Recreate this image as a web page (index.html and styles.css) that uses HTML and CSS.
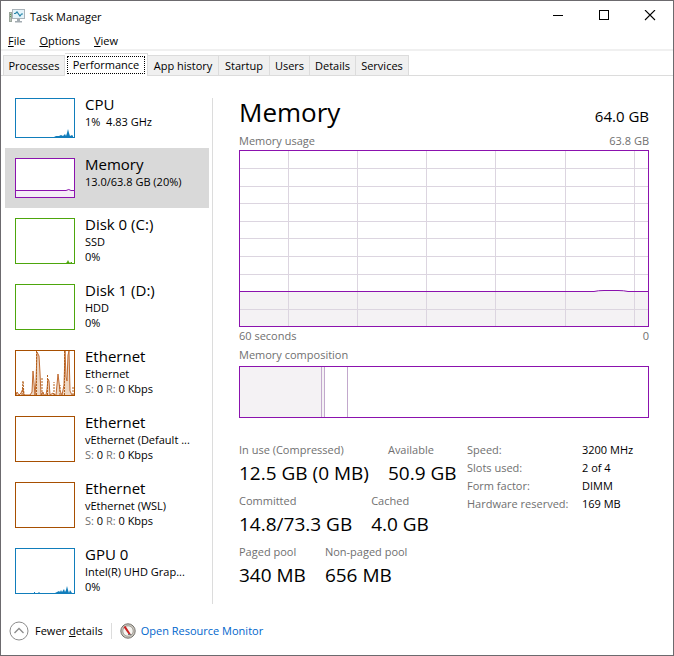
FILE: index.html
```html
<!DOCTYPE html>
<html lang="en">
<head>
<meta charset="utf-8">
<title>Task Manager</title>
<link rel="stylesheet" href="styles.css">
</head>
<body>
<div class="window">
  <header class="titlebar">
    <svg class="app-icon" width="16" height="16" viewBox="0 0 16 16" aria-hidden="true">
      <rect x="0.5" y="4.5" width="2" height="9" fill="#b9c2b9" stroke="#9aa59b"/>
      <path d="M1 6.500h1M1 8.500h1" stroke="#4f9a5a"/>
      <rect x="3.500" y="1.500" width="12" height="9" fill="#e4f3fa" stroke="#a9b3ba"/>
      <path d="M5 5.500h1.500l1.500-1.500 3 4 1.500-2h1.500" fill="none" stroke="#2785a8" stroke-width="1.200"/>
      <path d="M8 11h3v2h2v1.500H6V13h2z" fill="#a3acb2"/>
    </svg>
    <h1 class="app-title">Task Manager</h1>
    <div class="window-buttons">
      <button type="button" aria-label="Minimize"><svg width="12" height="12" viewBox="0 0 12 12"><path d="M1 5.500h10" stroke="#000"/></svg></button>
      <button type="button" aria-label="Maximize"><svg width="12" height="12" viewBox="0 0 12 12"><rect x="1.500" y="0.500" width="9" height="9" fill="none" stroke="#000"/></svg></button>
      <button type="button" aria-label="Close"><svg width="12" height="12" viewBox="0 0 12 12"><path d="M1 0l10 10M11 0L1 10" stroke="#000" stroke-width="1.100"/></svg></button>
    </div>
  </header>

  <nav class="menubar">
    <button type="button"><u>F</u>ile</button>
    <button type="button"><u>O</u>ptions</button>
    <button type="button"><u>V</u>iew</button>
  </nav>

  <div class="tabs" role="tablist">
    <button type="button" role="tab">Processes</button>
    <button type="button" role="tab" class="active" aria-selected="true"><span>Performance</span></button>
    <button type="button" role="tab">App history</button>
    <button type="button" role="tab">Startup</button>
    <button type="button" role="tab">Users</button>
    <button type="button" role="tab">Details</button>
    <button type="button" role="tab">Services</button>
  </div>

  <div class="content">
    <ul class="devices">
      <li><button type="button" class="device">
        <svg class="thumb blue short" viewBox="0 0 58 38"><path d="M38 38l2-1h3l2-1 2 1 2-2 1 2 1-3 1-4 1 4 1 3 2-1 1 1v1z" class="solid"/></svg>
        <span class="info"><span class="name">CPU</span><span>1%&nbsp; 4.83 GHz</span></span>
      </button></li>
      <li><button type="button" class="device selected">
        <svg class="thumb purple short" viewBox="0 0 58 38"><path d="M-1 31.500H50q3-2 5 0h4v8H-1z" class="area"/></svg>
        <span class="info"><span class="name">Memory</span><span>13.0/63.8 GB (20%)</span></span>
      </button></li>
      <li><button type="button" class="device">
        <svg class="thumb green" viewBox="0 0 58 44"><path d="M50 44l1-1 1-2 1 2 1 1 1-1h1v1z" class="solid"/></svg>
        <span class="info"><span class="name">Disk 0 (C:)</span><span>SSD</span><span>0%</span></span>
      </button></li>
      <li><button type="button" class="device">
        <svg class="thumb green" viewBox="0 0 58 44"></svg>
        <span class="info"><span class="name">Disk 1 (D:)</span><span>HDD</span><span>0%</span></span>
      </button></li>
      <li><button type="button" class="device">
        <svg class="thumb orange" viewBox="0 0 58 44">
          <path d="M0 44L1 41 3 44 5 42 7 38 8 44H14L16 41 17 20 19 44 20 30 21 1 23 5 24 22 25 44 27 41 28 44H30L31 38 32 28 33 30 34 44 37 42 39 44H40L42 23 44 40 46 44 48 34 49 0 50 26 51 30 52 4 53 0 54 40 56 44H58" class="pale"/>
          <path d="M6 44L7 30 8 44M20.500 44V0M26 44V26M31.500 44V24M38 44V31M44 44V34M48.500 44V0M57 44V35" class="dots"/>
        </svg>
        <span class="info"><span class="name">Ethernet</span><span>Ethernet</span><span><i>S:</i> 0 <i>R:</i> 0 Kbps</span></span>
      </button></li>
      <li><button type="button" class="device">
        <svg class="thumb orange" viewBox="0 0 58 44"></svg>
        <span class="info"><span class="name">Ethernet</span><span>vEthernet (Default ...</span><span><i>S:</i> 0 <i>R:</i> 0 Kbps</span></span>
      </button></li>
      <li><button type="button" class="device">
        <svg class="thumb orange" viewBox="0 0 58 44"></svg>
        <span class="info"><span class="name">Ethernet</span><span>vEthernet (WSL)</span><span><i>S:</i> 0 <i>R:</i> 0 Kbps</span></span>
      </button></li>
      <li><button type="button" class="device">
        <svg class="thumb blue" viewBox="0 0 58 44"><path d="M18 44v-1h1v1h3l1-1 1 1h15l2-1 2-1 1 1 1-2 1 2 2-3 1 3 1-2 1-4 1 4 1 3 1-3 2 3v1z" class="solid"/></svg>
        <span class="info"><span class="name">GPU 0</span><span>Intel(R) UHD Grap...</span><span>0%</span></span>
      </button></li>
    </ul>

    <main class="detail">
      <div class="heading">
        <h2>Memory</h2>
        <span class="capacity">64.0 GB</span>
      </div>
      <div class="caption top"><span>Memory usage</span><span>63.8 GB</span></div>
      <svg class="usage" viewBox="0 0 408 175" preserveAspectRatio="none" role="img" aria-label="Memory usage">
        <path d="M0 140.500H354Q358 139.500 364 139.500H378Q384 139.500 388 140.500H408V175H0z" class="fill"/>
        <path d="M48.500 0V175M117.500 0V175M186.500 0V175M255.500 0V175M325.500 0V175M394.500 0V175M0 17.500H408M0 35.500H408M0 52.500H408M0 70.500H408M0 87.500H408M0 105.500H408M0 123.500H408M0 158.500H408" class="grid"/>
        <path d="M0 140.500H354Q358 139.500 364 139.500H378Q384 139.500 388 140.500H408" class="line"/>
      </svg>
      <div class="caption"><span>60 seconds</span><span>0</span></div>
      <div class="caption">Memory composition</div>
      <div class="composition" role="img" aria-label="Memory composition">
        <span class="in-use"></span><span class="modified"></span><span class="standby"></span>
      </div>

      <div class="figures">
        <div class="stats">
          <dl>
            <div><dt>In use (Compressed)</dt><dd>12.5 GB (0 MB)</dd></div>
            <div><dt>Available</dt><dd>50.9 GB</dd></div>
          </dl>
          <dl>
            <div><dt>Committed</dt><dd>14.8/73.3 GB</dd></div>
            <div><dt>Cached</dt><dd>4.0 GB</dd></div>
          </dl>
          <dl>
            <div><dt>Paged pool</dt><dd>340 MB</dd></div>
            <div><dt>Non-paged pool</dt><dd>656 MB</dd></div>
          </dl>
        </div>
        <table class="hardware">
          <tr><th scope="row">Speed:</th><td>3200 MHz</td></tr>
          <tr><th scope="row">Slots used:</th><td>2 of 4</td></tr>
          <tr><th scope="row">Form factor:</th><td>DIMM</td></tr>
          <tr><th scope="row">Hardware reserved:</th><td>169 MB</td></tr>
        </table>
      </div>
    </main>
  </div>

  <footer class="footer">
    <button type="button" class="fewer">
      <svg width="20" height="20" viewBox="0 0 20 20" aria-hidden="true"><circle cx="10" cy="10" r="9" fill="#fff" stroke="#8c8c8c"/><path d="M5.500 12L10 7.500 14.500 12" fill="none" stroke="#8c8c8c" stroke-width="1.300"/></svg>
      <span>Fewer <u>d</u>etails</span>
    </button>
    <a class="monitor" href="#resource-monitor">
      <svg width="16" height="16" viewBox="0 0 16 16" aria-hidden="true"><circle cx="8" cy="8" r="7.200" fill="#c9c5bd" stroke="#76736d"/><circle cx="8" cy="8" r="5.200" fill="#f6f5f1" stroke="#96928a" stroke-width=".8"/><path d="M3.500 4l2-1 5 7.800-1.500 1z" fill="#cb2020"/><path d="M8 11.500h3.500" stroke="#777"/></svg>
      <span>Open Resource Monitor</span>
    </a>
  </footer>
</div>
</body>
</html>
```
FILE: styles.css
```css
* {
  box-sizing: border-box;
}

body {
  margin: 0;
  background: #fff;
  color: #000;
  font: 11px/15px "Open Sans", "Noto Sans", sans-serif;
}

button {
  margin: 0;
  padding: 0;
  border: 0;
  background: none;
  color: inherit;
  font: inherit;
}

h1, h2, ul, dl, dd {
  margin: 0;
  padding: 0;
  font-weight: 400;
}

.window {
  display: flex;
  flex-direction: column;
  min-height: 100vh;
  border: 1px solid #6c6a6e;
}

.titlebar {
  display: flex;
  align-items: center;
  height: 30px;
  padding-left: 8px;
}

.app-title {
  margin-left: 5px;
  font-size: 11px;
}

.window-buttons {
  display: flex;
  margin-left: auto;
}

.window-buttons button {
  display: grid;
  place-items: center;
  width: 46px;
  height: 28px;
}

.menubar {
  display: flex;
  gap: 14px;
  height: 20px;
  padding: 0 7px;
  border-bottom: 2px solid #f0f0f0;
}

.tabs {
  display: grid;
  grid-template-columns: 62px 83px 71px 51px 40px 46px 53px;
  align-items: end;
  height: 25px;
  padding-left: 2px;
  border-bottom: 1px solid #dcdcdc;
  white-space: nowrap;
}

.tabs button {
  height: 20px;
  border: 1px solid #dcdcdc;
  border-width: 1px 1px 0 0;
  background: #f0f0f0;
}

.tabs button:first-child {
  border-left-width: 1px;
}

.tabs .active {
  height: 23px;
  padding: 1px 2px 2px;
  margin-bottom: -1px;
  background: #fff;
}

.tabs .active span {
  display: block;
  height: 18px;
  border: 1px dotted #000;
  line-height: 15px;
}

.content {
  display: flex;
  flex: 1;
  padding: 12px 24px 0 4px;
}

.devices {
  flex: 0 0 204px;
  list-style: none;
}

.device {
  display: flex;
  gap: 10px;
  width: 100%;
  padding: 6px 10px 0;
  height: 66px;
  text-align: left;
}

.device:has(.short) {
  height: 60px;
}

.device.selected {
  background: #d9d9d9;
}

.thumb {
  flex: none;
  width: 60px;
  height: 46px;
  margin-top: 4px;
  border: 1px solid;
  background: #fff;
}

.thumb.short {
  height: 40px;
}

.thumb.blue { color: #117dbb; }
.thumb.purple { color: #8b12ae; }
.thumb.green { color: #4da60c; }
.thumb.orange { color: #a74f01; }

.thumb .solid {
  fill: currentColor;
}

.thumb .area {
  fill: #f4ecf6;
  stroke: currentColor;
}

.thumb .pale {
  fill: #eed6c2;
  stroke: #c06a30;
}

.thumb .dots {
  fill: none;
  stroke: #b3601c;
  stroke-dasharray: 2 1;
}

.info {
  display: flex;
  flex-direction: column;
  min-width: 0;
  white-space: nowrap;
}

.info .name {
  font-size: 15px;
  line-height: 20px;
}

.info i {
  color: #707070;
  font-style: normal;
}

.detail {
  flex: 1;
  min-width: 0;
  margin: 10px 0 0 3px;
  padding-left: 26px;
  border-left: 1px solid #dcdcdc;
}

.heading {
  display: flex;
  justify-content: space-between;
  align-items: baseline;
  height: 35px;
}

.heading h2 {
  font-size: 26px;
  line-height: 28px;
}

.capacity {
  font-size: 15px;
}

.caption {
  display: flex;
  justify-content: space-between;
  height: 19px;
  color: #707070;
}

.caption.top {
  height: 17px;
}

.usage {
  display: block;
  width: 100%;
  height: 177px;
  margin-bottom: 1px;
  border: 1px solid #8b12ae;
}

.usage path {
  fill: none;
  vector-effect: non-scaling-stroke;
}

.usage .fill { fill: #f4f2f4; }
.usage .grid { stroke: #dcd5e0; }
.usage .line { stroke: #8b12ae; }

.composition {
  display: flex;
  height: 52px;
  border: 1px solid #8b12ae;
}

.composition span {
  border-right: 1px solid #c2a8cc;
}

.in-use {
  width: 20%;
  background: #f4f2f4;
}

.modified {
  width: 3px;
  background: #f4f2f4;
}

.standby {
  width: 23px;
}

.figures {
  display: flex;
  margin-top: 24px;
}

.stats {
  flex: 0 0 228px;
  white-space: nowrap;
}

.stats dl {
  display: flex;
  gap: 19px;
  height: 51px;
}

dt {
  color: #707070;
}

dd {
  font-size: 19px;
  line-height: 32px;
}

.hardware {
  align-self: flex-start;
  border-collapse: collapse;
  line-height: 18px;
  margin-top: -1px;
  white-space: nowrap;
}

.hardware th {
  min-width: 115px;
  padding: 0;
  color: #707070;
  font-weight: 400;
  text-align: left;
}

.hardware td {
  padding: 0;
}

.footer {
  display: flex;
  align-items: center;
  height: 51px;
  padding: 2px 8px 0;
}

.fewer, .monitor {
  display: flex;
  align-items: center;
  gap: 6px;
}

.monitor {
  margin-left: 8px;
  padding-left: 8px;
  gap: 5px;
  border-left: 1px solid #dcdcdc;
  color: #0066cc;
  text-decoration: none;
}
```
